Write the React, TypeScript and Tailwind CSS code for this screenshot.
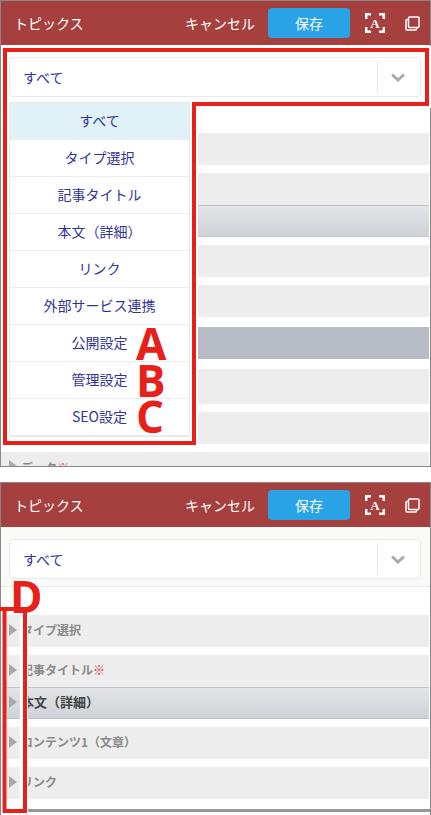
const jp = "font-['Noto_Sans_CJK_JP','Noto_Sans',sans-serif]";

type Row = {
  label?: string;
  required?: boolean;
  kind?: "plain" | "active" | "hover";
  className: string;
};

// labels of the rows under the open dropdown are covered, so they stay empty
const topRows: Row[] = [
  { className: "h-8" },
  { className: "h-8 mt-2" },
  { kind: "active", className: "h-8" },
  { className: "h-8 mt-2" },
  { className: "h-8 mt-2" },
  { kind: "hover", className: "h-8 mt-[10px]" },
  { className: "h-[35px] mt-[10px]" },
  { className: "h-8 mt-2" },
  { label: "データ", required: true, className: "h-8 mt-2 -ml-[5px] pl-[5px] items-start pt-[8px]" },
];

const bottomRows: Row[] = [
  { label: "タイプ選択", className: "h-8" },
  { label: "記事タイトル", required: true, className: "h-8 mt-2" },
  { label: "本文（詳細）", kind: "active", className: "h-8" },
  { label: "コンテンツ1（文章）", className: "h-8 mt-2" },
  { label: "リンク", className: "h-8 mt-2" },
];

const menuItems = [
  "すべて",
  "タイプ選択",
  "記事タイトル",
  "本文（詳細）",
  "リンク",
  "外部サービス連携",
  "公開設定",
  "管理設定",
  "SEO設定",
];

function Header() {
  return (
    <div className="flex h-11 items-center bg-[#a5403e] pl-[13px] pr-[10px] text-white">
      <span className="text-sm">トピックス</span>
      <span className="ml-auto text-sm">キャンセル</span>
      <button className="ml-[13px] flex h-[30px] w-[82px] items-center justify-center rounded bg-[#29a3e6] text-sm text-white">
        保存
      </button>
      <svg className="ml-[15px]" width="20" height="20" viewBox="0 0 20 20" fill="none" stroke="#fff" strokeWidth="2.5">
        <path d="M1.2 6V1.2H6M14 1.2h4.8V6M18.8 14v4.8H14M6 18.8H1.2V14" />
        <text x="10" y="14.5" textAnchor="middle" fill="#fff" stroke="none" fontSize="13" fontWeight="700" fontFamily="Liberation Serif, serif">
          A
        </text>
      </svg>
      <svg className="ml-[20px]" width="15" height="15" viewBox="0 0 15 15" fill="none" stroke="#fff" strokeWidth="1.5">
        <rect x="3.5" y="1" width="10.5" height="10.5" rx="1" />
        <path d="M3.5 3.5H2a1 1 0 0 0-1 1V13a1 1 0 0 0 1 1h8.5a1 1 0 0 0 1-1v-1.5" />
      </svg>
    </div>
  );
}

function SelectBar({ dotted }: { dotted?: boolean }) {
  return (
    <div className={`h-[60px] pl-2 pr-[9px] pt-3 ${dotted ? "border-b border-dotted border-[#ddd] bg-[#fafaf8]" : ""}`}>
      <div className="flex h-10 items-center rounded border border-[#e9e9e9] bg-white">
        <span className="flex-1 pl-[13px] text-sm text-[#33339c]">すべて</span>
        <div className="flex h-8 w-[43px] items-center justify-center border-l border-[#e6e6e6] pr-[2px]">
          <svg width="14" height="9" viewBox="0 0 14 9" fill="none" stroke="#aaa" strokeWidth="3">
            <path d="M1 1.5l6 5.5 6-5.5" />
          </svg>
        </div>
      </div>
    </div>
  );
}

function Rows({ rows }: { rows: Row[] }) {
  return (
    <div className="pl-[5px] pr-px pt-7">
      {rows.map((row, i) => (
        <div
          key={i}
          className={`flex items-center pb-[2px] font-bold ${row.className} ${
            row.kind === "active"
              ? "border-y border-[#c0c3c9] bg-gradient-to-b from-[#e2e4e7] to-[#cfd2d7] text-[13px] text-[#444]"
              : row.kind === "hover"
                ? "bg-[#b8bcc4] text-xs text-[#777]"
                : "bg-[#ededed] text-xs text-[#8a8a8a]"
          }`}
        >
          <svg className="ml-[3px] shrink-0" width="8" height="12" viewBox="0 0 8 12">
            <path d="M0 0l8 6-8 6z" fill="#a8a8a8" />
          </svg>
          <span className="ml-[4px]">{row.label}</span>
          {row.required && <span className="text-[#e5281e]">※</span>}
        </div>
      ))}
    </div>
  );
}

export default function App() {
  return (
    <div className={`relative h-[815px] w-[431px] overflow-hidden bg-white ${jp}`}>
      <div className="relative h-[467px] overflow-hidden border border-[#888]">
        <Header />
        <SelectBar />
        <Rows rows={topRows} />

        {/* open dropdown */}
        <div className="absolute left-[6px] top-[100px] w-[184px] bg-white pb-[10px] pl-[2px] pr-px pt-px">
          <div className="border border-[#e8e8e8]">
            {menuItems.map((item, i) => (
              <div
                key={item}
                className={`flex h-[37px] items-center justify-center border-b border-[#ececec] pb-[3px] text-sm text-[#33339c] ${
                  i === 0 ? "bg-[#e0f1f8]" : ""
                }`}
              >
                {item}
              </div>
            ))}
          </div>
        </div>
      </div>

      <div className="relative mt-[15px] h-[340px] border-x border-t border-[#888]">
        <Header />
        <SelectBar dotted />
        <Rows rows={bottomRows} />
        <div className="ml-[27px] mt-[10px] h-[3px] bg-[#999]" />
      </div>

      {/* annotations */}
      <svg className="pointer-events-none absolute left-0 top-0" width="431" height="815" fill="none">
        <path d="M5 50H427V104H194V443H5Z" stroke="#fff" strokeWidth="8" />
        <path d="M5 50H427V104H194V443H5Z" stroke="#e8201a" strokeWidth="4" />
        <path d="M24 612V811H28" stroke="#fff" strokeWidth="8" />
        <path d="M0 609H25V811H4.5V609" stroke="#e8201a" strokeWidth="4" />
      </svg>
      {[
        { label: "A", cls: "left-[136px] top-[318px]" },
        { label: "B", cls: "left-[136px] top-[355px]" },
        { label: "C", cls: "left-[136px] top-[391px]" },
        { label: "D", cls: "left-[10px] top-[571px]" },
      ].map((m) => (
        <span
          key={m.label}
          className={`absolute font-['Open_Sans',sans-serif] text-[44px] font-bold leading-[50px] text-[#e8201a] ${m.cls}`}
        >
          {m.label}
        </span>
      ))}
    </div>
  );
}
